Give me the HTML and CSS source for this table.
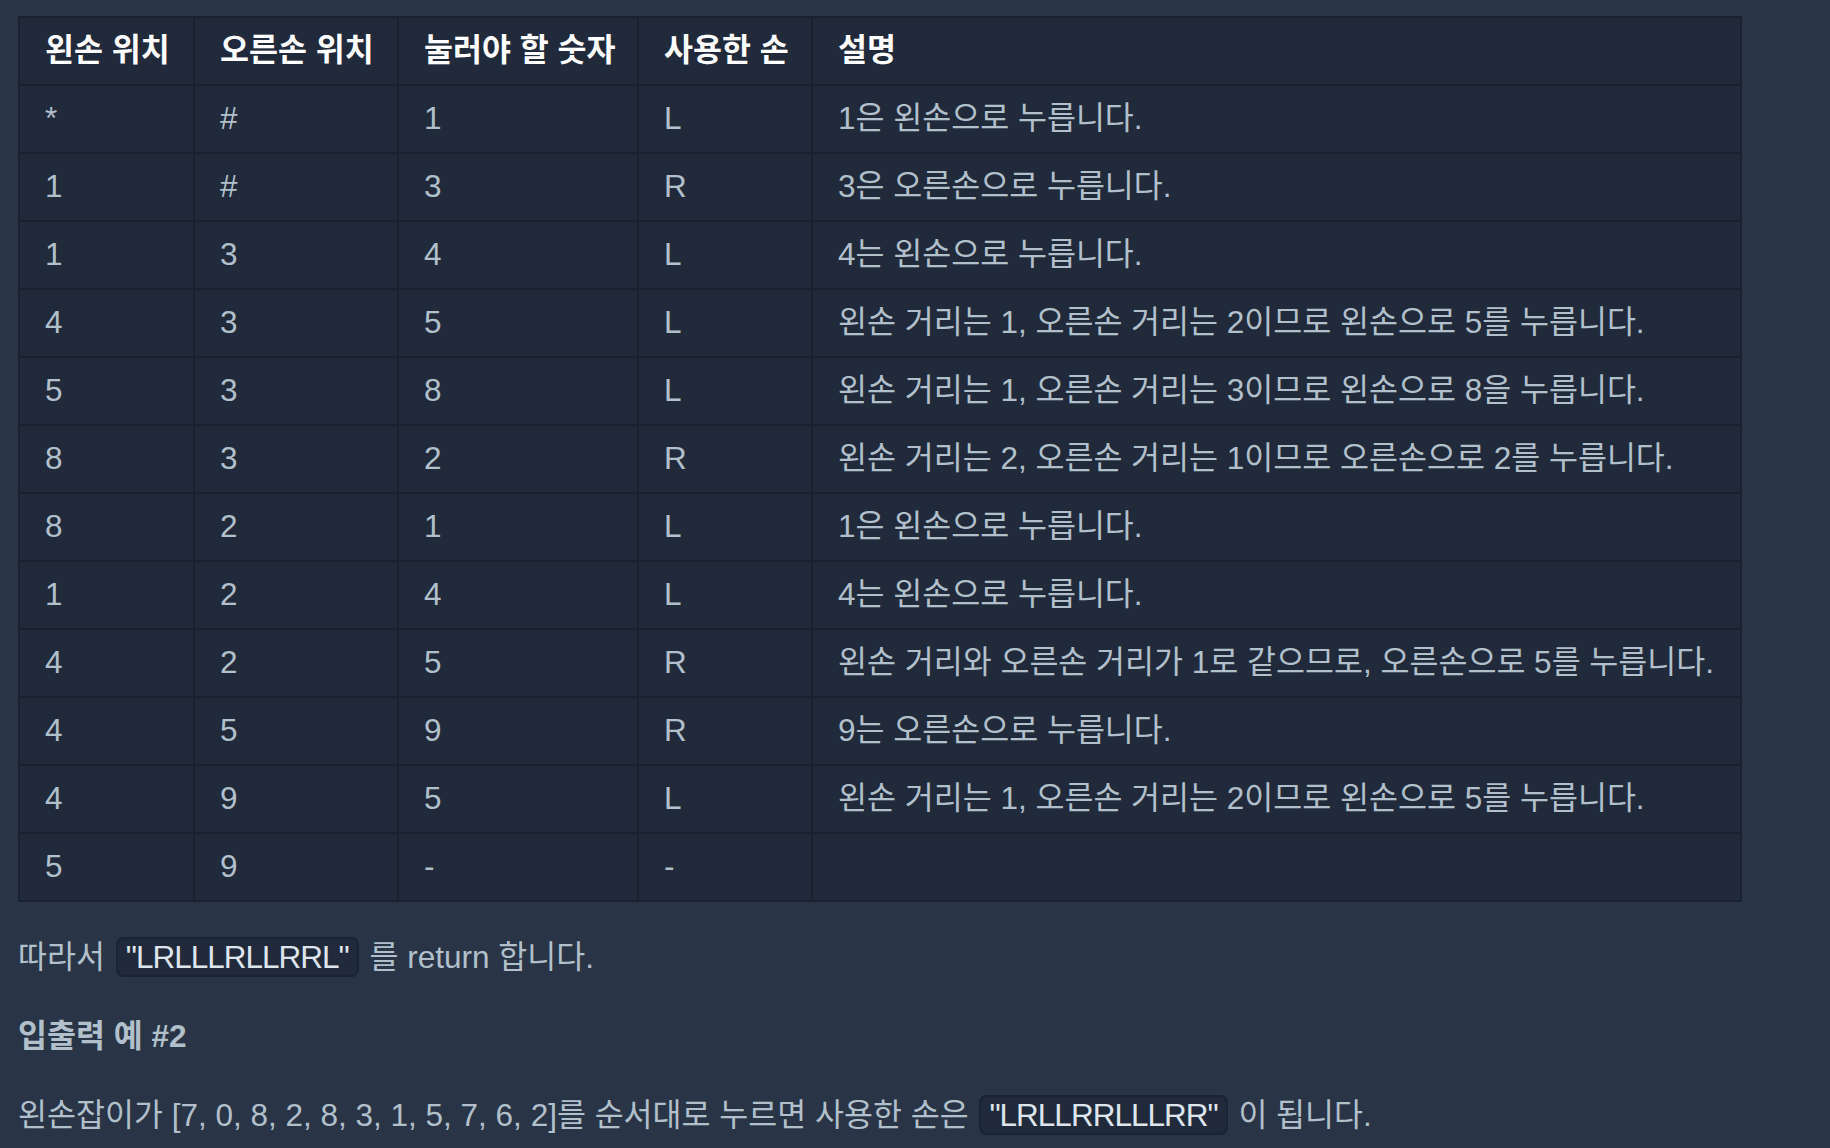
FILE: index.html
```html
<!DOCTYPE html>
<html lang="ko">
<head>
  <meta charset="UTF-8" />
  <meta name="viewport" content="width=device-width, initial-scale=1.0"/>
  <title>입출력 예 설명</title>
  <link rel="stylesheet" href="styles.css">
</head>
<body>

<div class="guide">
  <table class="step-table">
    <colgroup>
      <col class="c-left" />
      <col class="c-right" />
      <col class="c-num" />
      <col class="c-hand" />
      <col class="c-desc" />
    </colgroup>
    <thead>
      <tr>
        <th>왼손 위치</th>
        <th>오른손 위치</th>
        <th>눌러야 할 숫자</th>
        <th>사용한 손</th>
        <th>설명</th>
      </tr>
    </thead>
    <tbody>
      <tr><td>*</td><td>#</td><td>1</td><td>L</td><td>1은 왼손으로 누릅니다.</td></tr>
      <tr><td>1</td><td>#</td><td>3</td><td>R</td><td>3은 오른손으로 누릅니다.</td></tr>
      <tr><td>1</td><td>3</td><td>4</td><td>L</td><td>4는 왼손으로 누릅니다.</td></tr>
      <tr><td>4</td><td>3</td><td>5</td><td>L</td><td>왼손 거리는 1, 오른손 거리는 2이므로 왼손으로 5를 누릅니다.</td></tr>
      <tr><td>5</td><td>3</td><td>8</td><td>L</td><td>왼손 거리는 1, 오른손 거리는 3이므로 왼손으로 8을 누릅니다.</td></tr>
      <tr><td>8</td><td>3</td><td>2</td><td>R</td><td>왼손 거리는 2, 오른손 거리는 1이므로 오른손으로 2를 누릅니다.</td></tr>
      <tr><td>8</td><td>2</td><td>1</td><td>L</td><td>1은 왼손으로 누릅니다.</td></tr>
      <tr><td>1</td><td>2</td><td>4</td><td>L</td><td>4는 왼손으로 누릅니다.</td></tr>
      <tr><td>4</td><td>2</td><td>5</td><td>R</td><td>왼손 거리와 오른손 거리가 1로 같으므로, 오른손으로 5를 누릅니다.</td></tr>
      <tr><td>4</td><td>5</td><td>9</td><td>R</td><td>9는 오른손으로 누릅니다.</td></tr>
      <tr><td>4</td><td>9</td><td>5</td><td>L</td><td>왼손 거리는 1, 오른손 거리는 2이므로 왼손으로 5를 누릅니다.</td></tr>
      <tr><td>5</td><td>9</td><td>-</td><td>-</td><td></td></tr>
    </tbody>
  </table>

  <p class="text">따라서 <code>"LRLLLRLLRRL"</code> 를 return 합니다.</p>

  <h5 class="sub-title">입출력 예 #2</h5>

  <p class="text">왼손잡이가 [7, 0, 8, 2, 8, 3, 1, 5, 7, 6, 2]를 순서대로 누르면 사용한 손은 <code>"LRLLRRLLLRR"</code> 이 됩니다.</p>
</div>

</body>
</html>
```

FILE: styles.css
```css
body {
  font-family: "Liberation Sans", "Noto Sans CJK KR", sans-serif;
  margin: 0;
  padding: 0;
  background-color: #293546;
  color: #b2c0cc;
  font-size: 31.5px;
}

.guide {
  padding: 16px 0 0 18px;
}

.step-table {
  border-collapse: collapse;
  background-color: #212a3b;
  width: 1724px;
  table-layout: fixed;
}

.c-left { width: 175px; }
.c-right { width: 204px; }
.c-num { width: 240px; }
.c-hand { width: 174px; }

.step-table th,
.step-table td {
  border: 2px solid #1a2230;
  height: 66px;
  padding: 0 25px;
  text-align: left;
  white-space: nowrap;
  line-height: 1;
}

.step-table th {
  color: #ffffff;
  font-weight: 700;
}

.text {
  margin: 0;
  line-height: 44px;
}

.step-table + .text {
  margin-top: 33px;
}

.sub-title {
  margin: 35px 0;
  font-size: 31.5px;
  font-weight: 700;
  line-height: 44px;
}

code {
  font-family: "Liberation Sans", "Noto Sans CJK KR", sans-serif;
  color: #dfe5ec;
  background-color: #202a3a;
  border: 2px solid #1b2434;
  border-radius: 8px;
  padding: 0 8px;
  margin: 0 2px;
  letter-spacing: -1px;
}
```
